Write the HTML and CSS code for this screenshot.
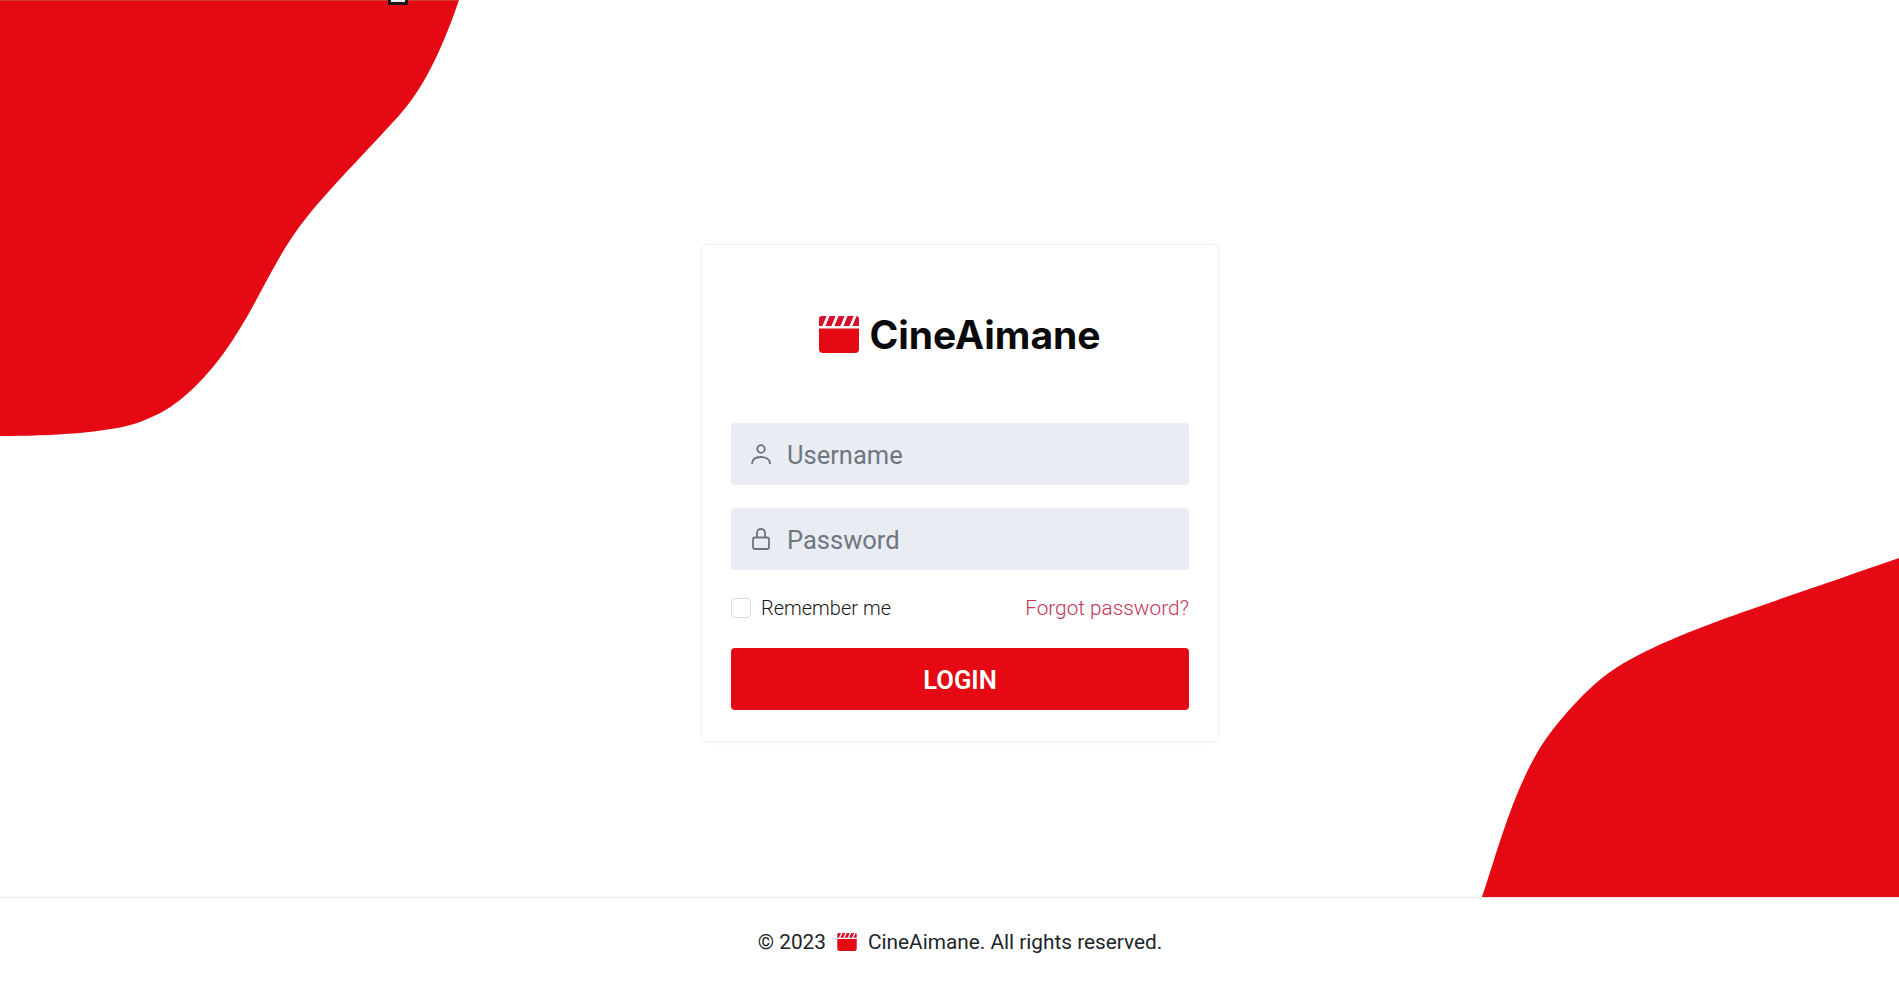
FILE: index.html
```html
<!DOCTYPE html>
<html lang="en">
<head>
  <meta charset="UTF-8">
  <meta name="viewport" content="width=device-width, initial-scale=1.0">
  <title>CineAimane - Login</title>
  <link rel="stylesheet" href="styles.css">
</head>
<body>
  <!-- background blobs -->
  <svg class="blob blob-top" viewBox="0 0 460 437" aria-hidden="true">
    <path d="M0 0H459C446 38 428 82 402 112C378 140 335 182 307 217C288 240 274 267 260 293C239 333 215 372 180 400C166 411 155 416 140 422C110 433 50 436 0 436Z"/>
    <rect class="blob-edge" width="459" height="1"/>
  </svg>
  <svg class="blob blob-bottom" viewBox="0 0 418 340" aria-hidden="true">
    <path d="M418 0V339H1C17 291 30.500 239 56 195C69 172 102 133 129 114C162 91 212 72 262 54C311 37 369 17 418 0Z"/>
  </svg>
  <div class="cursor-bit"></div>

  <main class="page">
    <div class="card">
      <div class="brand">
        <svg class="clapper" viewBox="0 0 40 37" aria-hidden="true">
          <path class="clapper-top" d="M3 0H37Q40 0 40 3V10H0V3Q0 0 3 0Z"/>
          <path class="clapper-cut" d="M8 -1H11L6 11H3ZM17 -1H20L15 11H12ZM26 -1H29L24 11H21ZM35 -1H38L33 11H30Z"/>
          <path class="clapper-body" d="M0 12.5H40V33Q40 37 36 37H4Q0 37 0 33Z"/>
        </svg>
        <span>CineAimane</span>
      </div>
      <form>
        <label class="field">
          <svg class="field-icon" viewBox="0 0 20 22" aria-hidden="true">
            <circle cx="10" cy="6" r="3.8"/>
            <path d="M1 21C1 16.5 4.5 14 10 14S19 16.5 19 21"/>
          </svg>
          <input type="text" placeholder="Username">
        </label>
        <label class="field">
          <svg class="field-icon" viewBox="0 0 20 22" aria-hidden="true">
            <rect x="2" y="9.5" width="16" height="11.5" rx="2"/>
            <path d="M6 9.5V5.2C6 2.6 7.6 1 10 1S14 2.6 14 5.2V9.5"/>
          </svg>
          <input type="password" placeholder="Password">
        </label>
        <div class="options">
          <label class="remember"><input type="checkbox"><span>Remember me</span></label>
          <a href="#" class="forgot">Forgot password?</a>
        </div>
        <button type="button" class="login-btn">LOGIN</button>
      </form>
    </div>
  </main>

  <footer class="footer">
    <span>© 2023</span>
    <svg class="clapper clapper-small" viewBox="0 0 40 37" aria-hidden="true">
      <path class="clapper-top" d="M3 0H37Q40 0 40 3V10H0V3Q0 0 3 0Z"/>
      <path class="clapper-cut" d="M8 -1H11L6 11H3ZM17 -1H20L15 11H12ZM26 -1H29L24 11H21ZM35 -1H38L33 11H30Z"/>
      <path class="clapper-body" d="M0 12.5H40V33Q40 37 36 37H4Q0 37 0 33Z"/>
    </svg>
    <span>CineAimane. All rights reserved.</span>
  </footer>
</body>
</html>
```

FILE: styles.css
```css
* {
  box-sizing: border-box;
}
body {
  font-family: 'Roboto', 'Liberation Sans', sans-serif;
  background-color: #ffffff;
  color: #212529;
  margin: 0;
  min-height: 100vh;
  overflow: hidden;
  position: relative;
}
.blob {
  position: absolute;
  display: block;
  fill: #e50914;
}
.blob-edge {
  fill: #cf3d2b;
}
.blob-top {
  top: 0;
  left: 0;
  width: 460px;
  height: 437px;
}
.blob-bottom {
  top: 558px;
  right: 0;
  width: 418px;
  height: 340px;
}
.cursor-bit {
  position: absolute;
  top: 0;
  left: 388px;
  width: 20px;
  height: 5px;
  background-color: #f4f0ea;
  border: 3px solid #1c1718;
  border-top: none;
}
.page {
  position: relative;
  display: flex;
  justify-content: center;
  align-items: center;
  height: 100vh;
  padding-left: 21px;
}
.card {
  width: 518px;
  height: 498px;
  padding: 71px 29px 32px;
  background-color: #ffffff;
  border: 1px solid #eff0f2;
  border-radius: 6px;
  box-shadow: 0 1px 4px rgba(0, 0, 0, 0.03);
}
.brand {
  display: flex;
  justify-content: center;
  align-items: center;
  gap: 10px;
  height: 37px;
  margin-bottom: 70px;
  font-family: 'Inter', sans-serif;
  font-size: 39px;
  font-weight: 700;
  color: #0a0a0a;
}
.clapper {
  width: 40px;
  height: 37px;
  flex-shrink: 0;
}
.clapper-top {
  fill: #d80f2c;
}
.clapper-cut {
  fill: #ffffff;
}
.clapper-body {
  fill: #e50914;
}
.field {
  display: flex;
  align-items: center;
  gap: 16px;
  height: 62px;
  margin-bottom: 23px;
  padding-left: 20px;
  background-color: #e9ecf3;
  border-radius: 4px;
}
.field-icon {
  width: 20px;
  height: 22px;
  flex-shrink: 0;
  fill: none;
  stroke: #6b7280;
  stroke-width: 1.8;
}
.field input {
  flex: 1;
  min-width: 0;
  padding: 2px 0 0;
  border: none;
  outline: none;
  background: none;
  font-family: inherit;
  font-size: 25.5px;
  font-weight: 400;
  color: #212529;
}
.field input::placeholder {
  color: #70767f;
  opacity: 1;
}
.options {
  display: flex;
  justify-content: space-between;
  align-items: center;
  height: 24px;
  margin: 26px 0 28px;
  font-size: 20px;
  font-weight: 300;
  color: #1a1a1a;
}
.remember {
  display: flex;
  align-items: center;
  gap: 10px;
}
.remember input {
  appearance: none;
  width: 20px;
  height: 20px;
  margin: 0;
  background-color: #ffffff;
  border: 1px solid #d8dbe0;
  border-radius: 4px;
}
.forgot {
  color: #c23356;
  font-size: 20.8px;
  text-decoration: none;
}
.login-btn {
  display: block;
  width: 100%;
  height: 62px;
  padding: 2px 0 0;
  border: none;
  border-radius: 4px;
  background-color: #e50914;
  color: #ffffff;
  font-family: inherit;
  font-size: 25.6px;
  font-weight: 600;
  cursor: pointer;
}
.footer {
  position: absolute;
  left: 0;
  right: 0;
  bottom: 0;
  height: 89px;
  display: flex;
  justify-content: center;
  align-items: center;
  gap: 11px;
  padding-left: 21px;
  background-color: #ffffff;
  border-top: 1px solid #e9eaec;
  font-size: 20.8px;
  font-weight: 400;
}
.clapper-small {
  width: 20px;
  height: 18px;
}
```
